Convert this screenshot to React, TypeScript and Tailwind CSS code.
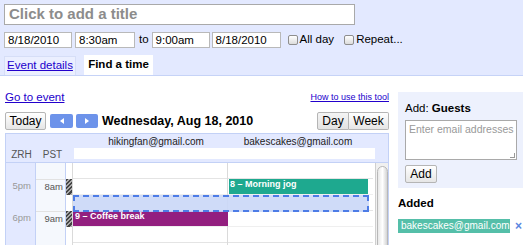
import React from 'react';

const Checkbox: React.FC = () => (
  <span className="inline-block w-[10px] h-[10px] rounded-[2px] border border-[#8e8e8e] bg-gradient-to-b from-white to-[#dcdcdc] mr-[2px]" />
);

const rows = [
  { zrh: '', pst: '', hour: false },
  { zrh: '5pm', pst: '8am', hour: true },
  { zrh: '', pst: '', hour: false },
  { zrh: '6pm', pst: '9am', hour: true },
  { zrh: '', pst: '', hour: false },
  { zrh: '', pst: '', hour: false },
];

const hatch = 'bg-[repeating-linear-gradient(135deg,#444_0_1.5px,#aaa_1.5px_3px)]';

const App: React.FC = () => {
  return (
    <div className="w-[523px] h-[245px] overflow-hidden bg-white font-['Liberation_Sans',Arial,sans-serif] text-[11px] text-black">
      {/* Title, dates and tabs */}
      <div className="bg-[#e3e9ff] pl-[4px] pt-[4px] border-b border-[#c6d3f7]">
        <div className="w-[351px] h-[21px] border border-[#a9a9a9] bg-white pl-[4px] flex items-center text-[15px] font-bold text-[#8c8c8c]">
          Click to add a title
        </div>
        <div className="mt-[7px] h-[16px] flex items-center text-[11.5px]">
          <div className="w-[68px] h-[16px] border border-[#b9b9b9] bg-white pl-[3px] leading-[14px]">8/18/2010</div>
          <div className="ml-[3px] w-[60px] h-[16px] border border-[#b9b9b9] bg-white pl-[3px] leading-[14px]">8:30am</div>
          <span className="ml-[4px] mr-[3px]">to</span>
          <div className="w-[58px] h-[16px] border border-[#b9b9b9] bg-white pl-[3px] leading-[14px]">9:00am</div>
          <div className="ml-[2px] w-[69px] h-[16px] border border-[#b9b9b9] bg-white pl-[3px] leading-[14px]">8/18/2010</div>
          <div className="ml-[7px] flex items-center">
            <Checkbox />
            <span>All day</span>
          </div>
          <div className="ml-[10px] flex items-center">
            <Checkbox />
            <span>Repeat...</span>
          </div>
        </div>
        <div className="mt-[8px] h-[19px] flex items-end text-[11.5px]">
          <div className="w-[72px] h-[19px] bg-[#ebefff] border border-b-0 border-[#d6def7] flex items-center justify-center">
            <span className="text-[#2200cc] underline">Event details</span>
          </div>
          <div className="ml-[8px] w-[69px] h-[20px] bg-white flex items-center justify-center font-bold">
            Find a time
          </div>
        </div>
      </div>

      {/* Find a time panel */}
      <div className="flex">
        <div className="ml-[5px] w-[384px] pt-[16px]">
          <div className="h-[12px] flex items-center justify-between">
            <span className="text-[#2200cc] underline text-[11.5px]">Go to event</span>
            <span className="text-[#2200cc] underline text-[9px]">How to use this tool</span>
          </div>
          <div className="mt-[8px] h-[18px] flex items-center">
            <div className="w-[41px] h-[18px] rounded-[2px] border border-[#b5b5b5] bg-gradient-to-b from-white to-[#e6e6e6] flex items-center justify-center text-[12px]">
              Today
            </div>
            <div className="ml-[4px] w-[23px] h-[14px] rounded-[2px] bg-[#6d93ea] flex items-center justify-center">
              <span className="w-0 h-0 border-y-[3.5px] border-y-transparent border-r-[4px] border-r-white" />
            </div>
            <div className="ml-[3px] w-[22px] h-[14px] rounded-[2px] bg-[#6d93ea] flex items-center justify-center">
              <span className="w-0 h-0 border-y-[3.5px] border-y-transparent border-l-[4px] border-l-white" />
            </div>
            <span className="ml-[4px] font-bold text-[12.5px]">Wednesday, Aug 18, 2010</span>
            <div className="ml-auto flex h-[18px] text-[12px]">
              <div className="w-[32px] border border-[#b5b5b5] rounded-l-[2px] bg-gradient-to-b from-[#f4f4f4] to-[#e2e2e2] flex items-center justify-center">
                Day
              </div>
              <div className="w-[40px] border border-l-0 border-[#b5b5b5] rounded-r-[2px] bg-gradient-to-b from-white to-[#e6e6e6] flex items-center justify-center">
                Week
              </div>
            </div>
          </div>

          {/* Calendar grid */}
          <div className="mt-[3px] border border-b-0 border-[#c3d1f6] h-[113px] overflow-hidden">
            <div className="bg-[#e3e9ff] h-[29px] border-b border-[#c3d1f6]">
              <div className="h-[14px] flex text-[10px] text-[#222]">
                <div className="w-[68px]" />
                <div className="w-[156px] text-center pl-[8px]">hikingfan@gmail.com</div>
                <div className="w-[146px] text-center pr-[10px]">bakescakes@gmail.com</div>
              </div>
              <div className="flex h-[12px] items-start">
                <div className="w-[31px] text-center text-[10px] text-[#555] leading-[14px]">ZRH</div>
                <div className="w-[31px] text-center text-[10px] text-[#555] leading-[14px]">PST</div>
                <div className="ml-[6px] w-[301px] h-[11px] bg-white" />
              </div>
            </div>
            <div className="flex h-[84px]">
              <div className="w-[30px] bg-[#e3e9ff] border-r border-[#c3d1f6]">
                {rows.map((r, i) => (
                  <div key={i} className="h-[16px] text-right pr-[4px] text-[9.5px] text-[#999] leading-[12px] pt-[1px]">
                    {r.zrh}
                  </div>
                ))}
              </div>
              <div className="w-[30px] bg-[#f5f8fd] border-r border-[#c3d1f6]">
                {rows.map((r, i) => (
                  <div key={i} className={`h-[16px] text-right pr-[2px] text-[9.5px] text-[#555] leading-[12px] pt-[1px] ${r.hour ? 'border-t border-[#e2e2e2]' : ''}`}>
                    {r.pst}
                  </div>
                ))}
              </div>
              <div className="w-[7px] border-r border-[#dadada]">
                {rows.map((r, i) => (
                  <div key={i} className={`h-[16px] ${r.hour ? hatch : ''}`} />
                ))}
              </div>
              <div className="relative flex">
                <div className="w-[155px] border-r border-[#dadada]">
                  {rows.map((r, i) => (
                    <div key={i} className={`h-[16px] border-b ${i % 2 === 0 ? 'border-[#e4e4e4]' : 'border-[#efefef]'}`} />
                  ))}
                </div>
                <div className="w-[145px]">
                  {rows.map((r, i) => (
                    <div key={i} className={`h-[16px] border-b ${i % 2 === 0 ? 'border-[#e4e4e4]' : 'border-[#efefef]'}`} />
                  ))}
                </div>
                {/* events */}
                <div className="absolute left-[156px] top-[16px] w-[139px] h-[15px] bg-[#1ea98f] text-white font-bold text-[9px] leading-[11px] pl-[1px]">
                  8 – Morning jog
                </div>
                <div className="absolute left-0 top-[48px] w-[155px] h-[15px] bg-[#931f7f] text-white font-bold text-[9px] leading-[11px] pl-[2px]">
                  9 – Coffee break
                </div>
                <div className="absolute left-0 top-[32px] w-[296px] h-[17px] bg-[#cad7f7]/90 border-2 border-dashed border-[#4d7ce6]" />
              </div>
              <div className="ml-auto w-[13px] bg-[#f0f0f0] border-l border-[#cfcfcf] flex justify-center pt-[3px]">
                <div className="w-[11px] h-[90px] rounded-t-[6px] bg-gradient-to-r from-[#e8e8e8] via-white to-[#d4d4d4] border border-[#b8b8b8]" />
              </div>
            </div>
          </div>
        </div>

        {/* Guests panel */}
        <div className="ml-[9px] w-[125px] pt-[16px]">
          <div className="bg-[#edf1fd] h-[96px] pl-[7px] pt-[8px]">
            <div className="text-[11.5px]">
              Add: <span className="font-bold">Guests</span>
            </div>
            <div className="mt-[3px] w-[112px] h-[40px] border border-[#a9a9a9] bg-white pl-[3px] pt-[1px] text-[10.5px] text-[#999] whitespace-nowrap overflow-hidden relative">
              Enter email addresses
              <span className="absolute right-[1px] bottom-[1px] w-[5px] h-[5px] border-r border-b border-[#999]" />
            </div>
            <div className="mt-[5px] w-[32px] h-[18px] rounded-[2px] border border-[#b5b5b5] bg-gradient-to-b from-white to-[#e6e6e6] flex items-center justify-center text-[12px]">
              Add
            </div>
          </div>
          <div className="mt-[8px] font-bold text-[11.5px] leading-[14px]">Added</div>
          <div className="mt-[9px] flex items-center">
            <div className="w-[112px] h-[14px] bg-[#55bfa9] text-white text-[10px] leading-[14px] pl-[3px] whitespace-nowrap overflow-hidden">
              bakescakes@gmail.com
            </div>
            <span className="ml-[5px] text-[#5a86e0] text-[12px] font-bold leading-[14px]">×</span>
          </div>
          <div className="mt-[16px] border-b border-[#dddddd]" />
        </div>
      </div>
    </div>
  );
};

export default App;
